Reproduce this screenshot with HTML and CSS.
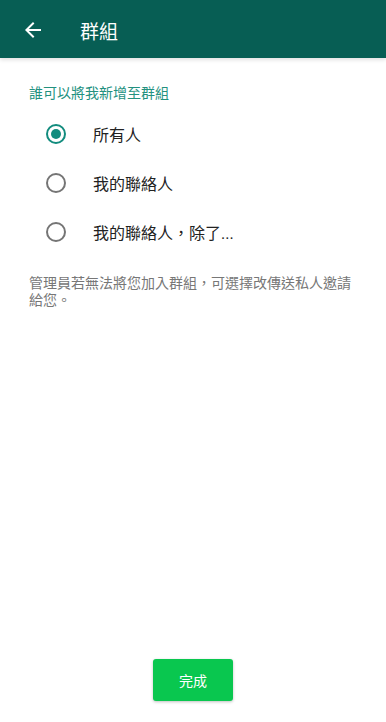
FILE: index.html
```html
<!DOCTYPE html>
<html>
<head>
	<title>群組</title>
	<meta charset="utf-8">
	<link rel="stylesheet" href="styles.css">
</head>
<body>
	<div class="page">
		<!-- 頂部標題列 -->
		<div class="toolbar">
			<svg class="toolbar-back" width="24" height="24" viewBox="0 0 24 24">
				<path d="M20 11H7.83l5.59-5.59L12 4l-8 8 8 8 1.41-1.41L7.83 13H20v-2z" fill="#fff"/>
			</svg>
			<span class="toolbar-title">群組</span>
		</div>
		<!-- 選項 -->
		<div class="content">
			<div class="section-label">誰可以將我新增至群組</div>
			<ul class="radio-list">
				<li class="radio-item checked"><span class="radio"></span><span class="radio-text">所有人</span></li>
				<li class="radio-item"><span class="radio"></span><span class="radio-text">我的聯絡人</span></li>
				<li class="radio-item"><span class="radio"></span><span class="radio-text">我的聯絡人，除了...</span></li>
			</ul>
			<p class="hint">管理員若無法將您加入群組，可選擇改傳送私人邀請給您。</p>
		</div>
		<!-- 完成按鈕 -->
		<div class="footer">
			<button class="done-btn">完成</button>
		</div>
	</div>
</body>
</html>
```

FILE: styles.css
```css
body {
	margin: 0;
	font-family: Roboto, "Noto Sans CJK TC", sans-serif;
	background: #fff;
}
.page {
	width: 386px;
	height: 722px;
	display: flex;
	flex-direction: column;
}
/* 標題列 */
.toolbar {
	height: 58px;
	background-color: #075e54;
	display: flex;
	align-items: center;
	padding-left: 21px;
	box-shadow: 0 2px 4px rgba(0,0,0,0.12);
	flex-shrink: 0;
}
.toolbar-back {
	display: block;
	margin-top: 2px;
}
.toolbar-title {
	color: #fff;
	font-size: 19px;
	margin-left: 35px;
	margin-top: 2px;
}
.content {
	padding: 25px 29px 0 29px;
}
.section-label {
	font-size: 14px;
	line-height: 20px;
	color: #23917f;
}
.radio-list {
	list-style: none;
	margin: 6px 0 0 0;
	padding: 0;
}
.radio-item {
	height: 49px;
	display: flex;
	align-items: center;
	padding-left: 17px;
}
.radio {
	width: 16px;
	height: 16px;
	border: 2px solid #757575;
	border-radius: 50%;
	position: relative;
	flex-shrink: 0;
}
.radio-item.checked .radio {
	border-color: #128c7e;
}
.radio-item.checked .radio::after {
	content: '';
	position: absolute;
	left: 3px;
	top: 3px;
	width: 10px;
	height: 10px;
	border-radius: 50%;
	background-color: #128c7e;
}
.radio-text {
	margin-left: 27px;
	font-size: 16px;
	color: #222;
}
.hint {
	margin: 19px 0 0 0;
	font-size: 14px;
	line-height: 17px;
	color: #777;
}
.footer {
	margin-top: auto;
	display: flex;
	justify-content: center;
	padding-bottom: 21px;
}
.done-btn {
	width: 80px;
	height: 42px;
	border: none;
	border-radius: 3px;
	background-color: #09c74f;
	color: #fff;
	font-family: Roboto, "Noto Sans CJK TC", sans-serif;
	font-size: 14px;
	box-shadow: 0 1px 3px rgba(0,0,0,0.25);
}
```
